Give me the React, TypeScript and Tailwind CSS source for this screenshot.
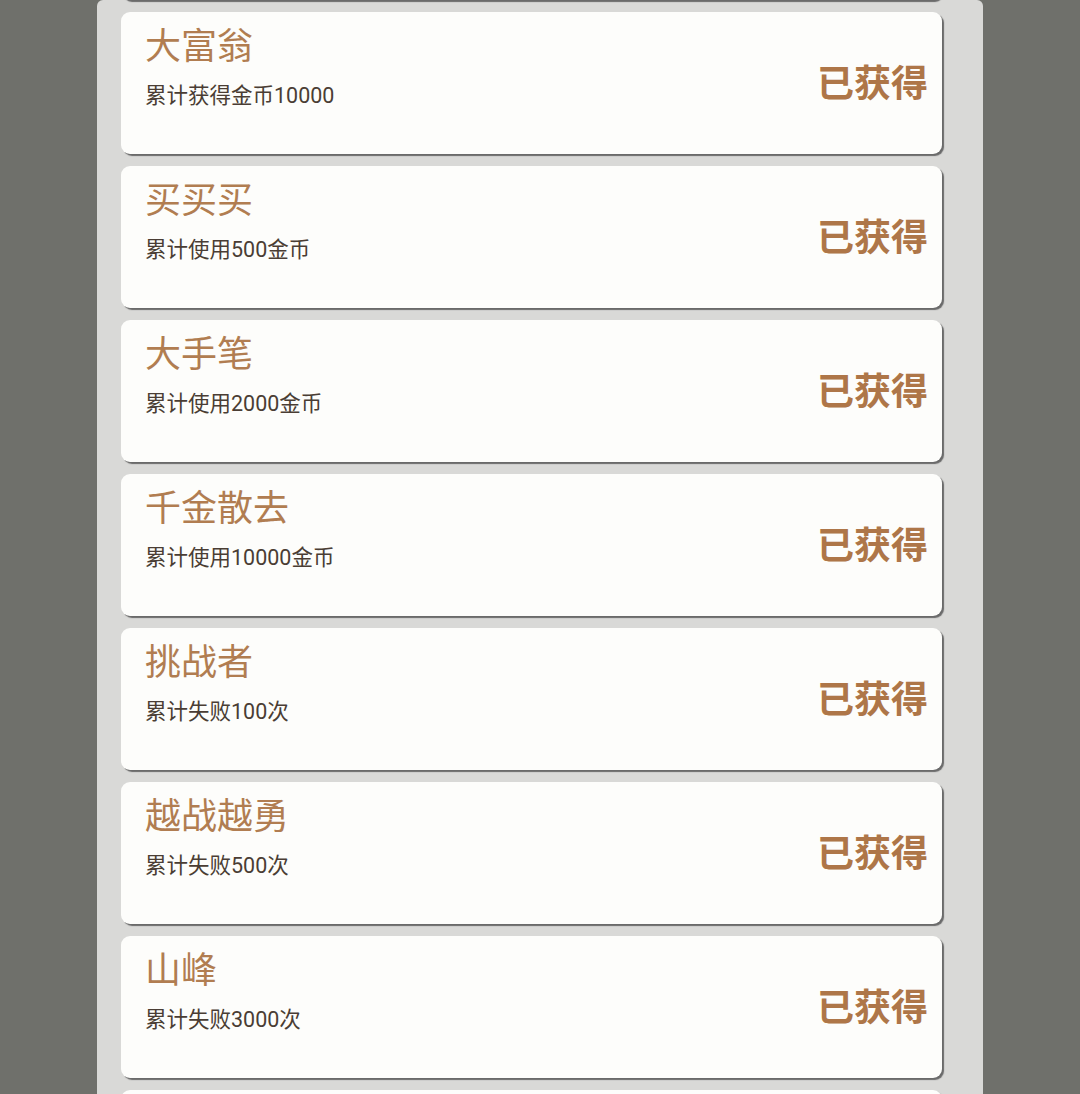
import React from "react";

type Achievement = {
  title: string;
  desc: string;
};

const achievements: Achievement[] = [
  { title: "小富翁", desc: "累计获得金币5000" },
  { title: "大富翁", desc: "累计获得金币10000" },
  { title: "买买买", desc: "累计使用500金币" },
  { title: "大手笔", desc: "累计使用2000金币" },
  { title: "千金散去", desc: "累计使用10000金币" },
  { title: "挑战者", desc: "累计失败100次" },
  { title: "越战越勇", desc: "累计失败500次" },
  { title: "山峰", desc: "累计失败3000次" },
  { title: "不屈", desc: "累计失败10000次" },
];

function AchievementCard({ item }: { item: Achievement }) {
  return (
    <div className="flex h-[142px] shrink-0 items-center justify-between rounded-[9px] bg-[#fdfdfb] pl-6 pr-[14px] shadow-[2px_2px_1px_#6a6a6a]">
      <div className="flex h-full flex-col pt-[9px]">
        <div className="text-[36px] leading-[44px] text-[#b17d51]">{item.title}</div>
        <div
          className="mt-[16px] text-[21.5px] leading-[30px] text-[#4a3d34]"
          style={{ fontFamily: 'Roboto, "Noto Sans CJK SC", sans-serif' }}
        >
          {item.desc}
        </div>
      </div>
      <div className="pb-[4px] text-[37px] font-bold leading-none text-[#ae7648]">已获得</div>
    </div>
  );
}

export default function App() {
  return (
    <div
      className="flex h-[1094px] justify-center overflow-hidden bg-[#6f706b]"
      style={{ fontFamily: '"Noto Sans CJK SC", "Noto Sans", sans-serif' }}
    >
      <div className="w-[886px] rounded-t-[6px] bg-[#d9d9d7] pl-6 pr-[41px]">
        <div className="-mt-[142px] flex flex-col gap-3">
          {achievements.map((a) => (
            <AchievementCard key={a.title} item={a} />
          ))}
        </div>
      </div>
    </div>
  );
}
